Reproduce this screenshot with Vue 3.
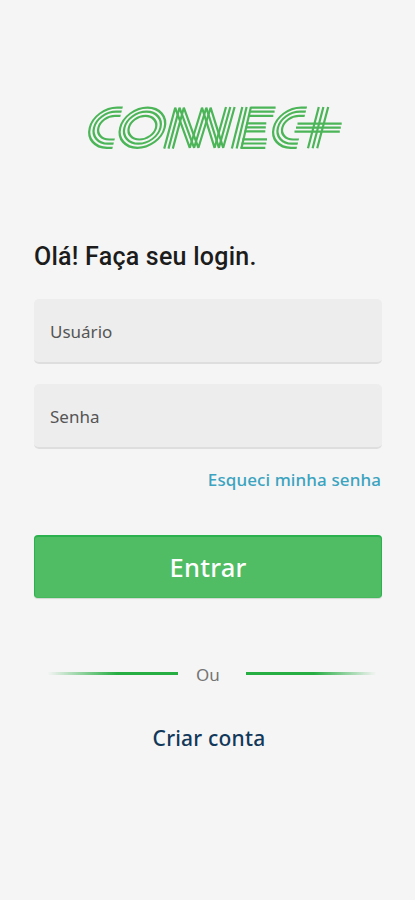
<script setup>
import { ref } from 'vue'

const user = ref('')
const password = ref('')

const rings = [
  { rx: 22.2, ry: 20.1 },
  { rx: 18, ry: 16 },
  { rx: 13.6, ry: 11.8 }
]
const cPath = (cx, end, { rx, ry }) =>
  `M${end} ${127.7 - ry}H${cx}A${rx} ${ry} 0 0 0 ${cx} ${127.7 + ry}H${end}`
const offsets = [0, 4.3, 8.6]
</script>

<template>
  <main class="screen">
    <svg class="logo" viewBox="84 103 262 49" role="img" aria-label="Connect">
      <g class="strokes">
        <g transform="translate(31.93 0) skewX(-14.036)">
          <path v-for="r in rings" :key="'c' + r.rx" :d="cPath(112, 117.6, r)" />
          <ellipse v-for="r in rings" :key="'o' + r.rx" cx="142.4" cy="127.7" :rx="r.rx" :ry="r.ry" />
          <path v-for="r in rings" :key="'d' + r.rx" :d="cPath(295.9, 301.8, r)" />
        </g>
        <path
          v-for="o in offsets"
          :key="'n' + o"
          :d="`M${164.2 + o} 148.6L${175.2 + o} 107.7L${189.8 + o} 147.8L${202 + o} 107.7L${214.6 + o} 147.8L${226 + o} 107`"
        />
        <path v-for="o in offsets" :key="'e' + o" :d="`M${231.9 + o * 1.1} 148.6L${242.3 + o} 107`" />
        <path d="M250.5 107.6H275.6M249.5 111.7H274.6M248.5 115.9H273.3M246.5 123.3H266.3M245.5 127.3H265.8M244.5 131.3H265.3M242.5 139.4H267M241.5 143.5H266.3M240.5 147.8H265.3" />
        <path d="M318.8 107L308 148.3M323.4 107L312.6 148.3M328.2 107L317.2 148.3M297.5 123.7H341.7M296 127.7H340.8M294.5 131.7H339.8" />
      </g>
    </svg>

    <h1 class="title">Olá! Faça seu login.</h1>

    <form class="form" @submit.prevent>
      <input v-model="user" class="field" type="text" placeholder="Usuário" />
      <input v-model="password" class="field" type="password" placeholder="Senha" />
      <a class="forgot">Esqueci minha senha</a>
      <button class="submit" type="submit">Entrar</button>
    </form>

    <div class="divider">
      <span class="line left"></span>
      <span class="or">Ou</span>
      <span class="line right"></span>
    </div>

    <a class="create">Criar conta</a>
  </main>
</template>

<style>
body {
  background: #f5f5f5;
}
</style>

<style scoped>
.screen {
  box-sizing: border-box;
  height: 900px;
  padding: 103px 33px 0 34px;
  display: flex;
  flex-direction: column;
  background: #f5f5f5;
  font-family: "Noto Sans", "Open Sans", sans-serif;
}
.logo {
  width: 262px;
  height: 49px;
  margin-left: 50px;
  flex: none;
}
.strokes {
  fill: none;
  stroke: #4bb558;
  stroke-width: 2.2;
  stroke-linejoin: bevel;
}
.title {
  margin: 89px 0 0;
  height: 32px;
  font: 500 25px/32px Roboto, sans-serif;
  letter-spacing: 0.24px;
  color: #1c1c1c;
  white-space: nowrap;
}
.form {
  margin-top: 26px;
  display: flex;
  flex-direction: column;
}
.field {
  box-sizing: border-box;
  width: 100%;
  height: 65px;
  margin: 0 0 20px;
  padding: 2px 16px 0;
  border: 0;
  border-bottom: 2px solid #dedede;
  border-radius: 5px;
  background: #ededed;
  font: 400 17px/24px "Noto Sans", sans-serif;
  color: #444;
  outline: none;
}
.field::placeholder {
  color: #555;
  opacity: 1;
}
.forgot {
  align-self: flex-end;
  height: 24px;
  margin-top: -1px;
  margin-right: 1px;
  font-size: 17px;
  line-height: 24px;
  font-weight: 500;
  letter-spacing: 0.1px;
  color: #3ba3bf;
}
.submit {
  box-sizing: border-box;
  height: 63px;
  margin-top: 43px;
  padding: 0 0 1px;
  border: 1px solid #2bb24e;
  border-top-width: 2px;
  border-bottom-color: #45b95c;
  border-radius: 4px;
  background: #50bc63;
  box-shadow: 0 1px 1px #d0d8d0;
  font: 500 25.5px/30px "Noto Sans", sans-serif;
  letter-spacing: 0.2px;
  color: #fff;
}
.divider {
  height: 24px;
  margin-top: 65px;
  display: flex;
  align-items: center;
}
.line {
  width: 136px;
  height: 3px;
  margin-bottom: 3px;
}
.left {
  margin-left: 8px;
  background: linear-gradient(to left, #26ae43 0, #26ae43 45%, #26ae4300 96%);
}
.right {
  background: linear-gradient(to right, #26ae43 0, #26ae43 50%, #26ae4300 96%);
}
.or {
  width: 68px;
  padding-right: 8px;
  box-sizing: border-box;
  text-align: center;
  font-size: 17px;
  line-height: 24px;
  color: #747474;
}
.create {
  align-self: center;
  margin-top: 36px;
  margin-left: 2px;
  font-size: 21px;
  line-height: 30px;
  font-weight: 500;
  letter-spacing: 0.2px;
  color: #12385a;
}
</style>
